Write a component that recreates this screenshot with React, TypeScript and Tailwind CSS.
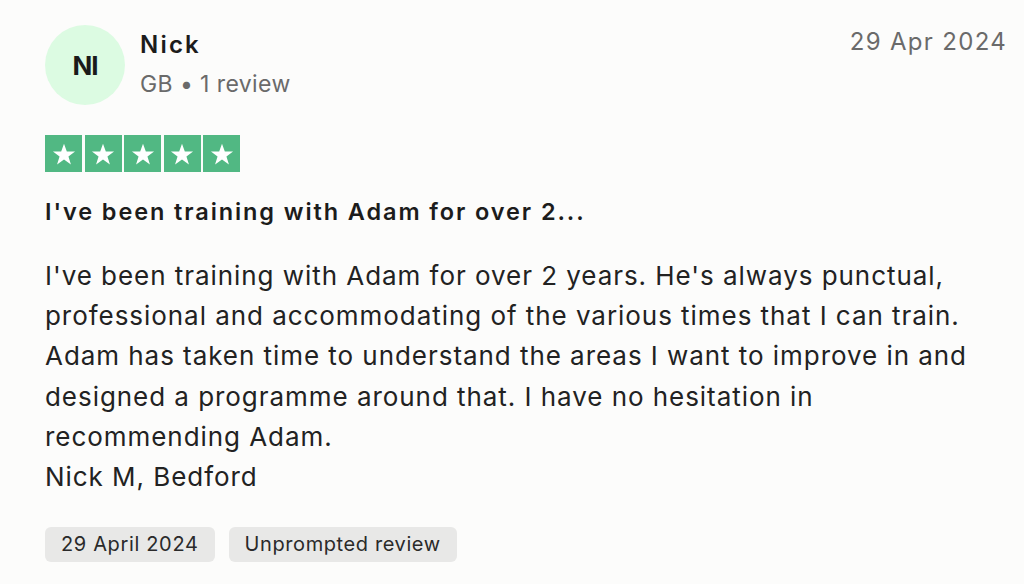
import React from "react";

function Star() {
  return (
    <div className="w-[37px] h-[37px] bg-[#51b883] flex items-center justify-center">
      <svg width="26" height="26" viewBox="0 0 24 24">
        <path d="M12 2.5l2.6 7.3h7.6l-6.1 4.5 2.3 7.3L12 17.1l-6.4 4.5 2.3-7.3L1.8 9.8h7.6z" fill="#ffffff" />
      </svg>
    </div>
  );
}

export default function App() {
  return (
    <div className="w-[1024px] h-[584px] bg-[#fcfcfb] text-[#1c1c1c] font-['Inter',sans-serif] px-[45px] pt-[25px] overflow-hidden">
      <div className="flex items-start justify-between">
        <div className="flex items-start gap-[15px]">
          <div className="w-[80px] h-[80px] rounded-full bg-[#dcfbe2] flex items-center justify-center text-[26px] font-bold tracking-[-1px] text-[#1a1a1a]">
            NI
          </div>
          <div className="flex flex-col mt-[2px]">
            <div className="text-[24px] font-semibold leading-[36px] tracking-[2.2px]">Nick</div>
            <div className="mt-[6px] text-[23px] text-[#6a6a6a] leading-[30px] tracking-[0.4px]">GB • 1 review</div>
          </div>
        </div>
        <div className="text-[24px] text-[#6a6a6a] leading-[30px] pt-[2px] -mr-[28px] tracking-[1.3px]">29 Apr 2024</div>
      </div>
      <div className="flex gap-[2.5px] mt-[30px]">
        <Star />
        <Star />
        <Star />
        <Star />
        <Star />
      </div>
      <div className="mt-[25px] text-[23.5px] font-semibold leading-[30px] tracking-[1.9px] text-[#1c1c1c]">
        I've been training with Adam for over 2...
      </div>
      <div className="mt-[29px] text-[26px] leading-[40.2px] tracking-[0.95px] text-[#222]">
        I've been training with Adam for over 2 years. He's always punctual,
        <br />
        professional and accommodating of the various times that I can train.
        <br />
        Adam has taken time to understand the areas I want to improve in and
        <br />
        designed a programme around that. I have no hesitation in
        <br />
        recommending Adam.
        <br />
        Nick M, Bedford
      </div>
      <div className="flex gap-[14px] mt-[30px]">
        <div className="h-[35px] px-[16px] rounded-[6px] bg-[#e8e8e7] text-[20px] leading-[35px] tracking-[0.65px] text-[#2a2a2a]">29 April 2024</div>
        <div className="h-[35px] px-[16px] rounded-[6px] bg-[#e8e8e7] text-[20px] leading-[35px] tracking-[0.6px] text-[#2a2a2a]">Unprompted review</div>
      </div>
    </div>
  );
}
